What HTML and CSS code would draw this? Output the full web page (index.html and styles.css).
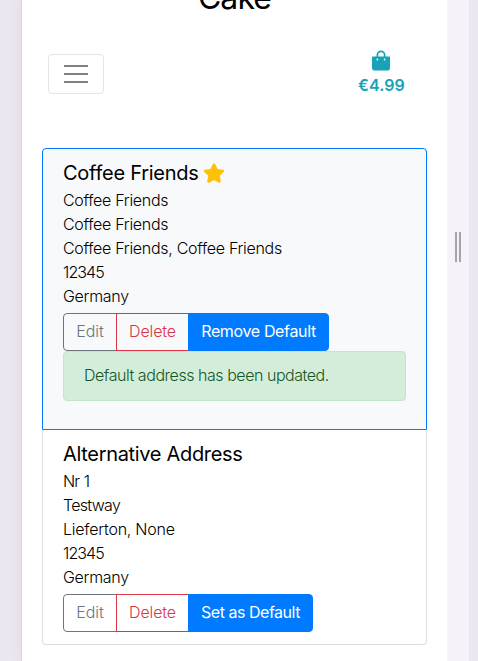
FILE: index.html
```html
<!DOCTYPE html>
<html lang="en">
<head>
<meta charset="utf-8">
<title>Addresses</title>
<link rel="stylesheet" href="styles.css">
</head>
<body>
<div class="stage">
  <main class="page">
    <h1 class="brand"><span>Cake</span></h1>
    <nav class="navbar">
      <button class="toggler" aria-label="Menu">
        <svg width="30" height="30" viewBox="0 0 30 30"><path d="M3 7h24M3 15h24M3 23h24" stroke="#808080" stroke-width="2" stroke-linecap="butt"/></svg>
      </button>
      <a class="cart">
        <svg class="bag" width="18" height="21" viewBox="0 0 18 21"><path d="M5.400 8V5a3.600 3.600 0 0 1 7.200 0V8" fill="none" stroke="#17a2b8" stroke-width="1.700"/><path d="M1 6.500h16a1 1 0 0 1 1 1v9.900a3.200 3.200 0 0 1-3.200 3.200H3.200A3.200 3.200 0 0 1 0 17.400V7.500a1 1 0 0 1 1-1z" fill="#17a2b8"/><circle cx="5.400" cy="9.500" r=".9" fill="#fff"/><circle cx="12.600" cy="9.500" r=".9" fill="#fff"/></svg>
        <span class="price">€4.99</span>
      </a>
    </nav>
    <section class="list">
      <article class="item active">
        <h5><span>Coffee Friends</span><svg class="star" width="22" height="20" viewBox="0 0 576 512"><path fill="#ffc107" d="M259.300 17.800 194 150.200 47.900 171.500c-26.200 3.800-36.700 36.100-17.700 54.600l105.700 103-25 145.500c-4.500 26.300 23.200 46 46.400 33.700L288 439.600l130.700 68.700c23.200 12.200 50.900-7.400 46.400-33.700l-25-145.500 105.700-103c19-18.500 8.500-50.800-17.700-54.600L382 150.200 316.700 17.800c-11.700-23.600-45.600-23.900-57.400 0z"/></svg></h5>
        <p>Coffee Friends</p>
        <p>Coffee Friends</p>
        <p>Coffee Friends, Coffee Friends</p>
        <p class="zip">12345</p>
        <p>Germany</p>
        <div class="group"><button class="edit">Edit</button><button class="delete">Delete</button><button class="primary remove">Remove Default</button></div>
        <div class="alert">Default address has been updated.</div>
      </article>
      <article class="item">
        <h5 class="alt">Alternative Address</h5>
        <p class="nr">Nr 1</p>
        <p class="street">Testway</p>
        <p class="city">Lieferton, None</p>
        <p class="zip">12345</p>
        <p>Germany</p>
        <div class="group"><button class="edit">Edit</button><button class="delete">Delete</button><button class="primary set">Set as Default</button></div>
      </article>
    </section>
  </main>
  <aside class="handle"><i></i><i></i></aside>
</div>
</body>
</html>
```
FILE: styles.css
```css
* { box-sizing: border-box; }
body {
  margin: 0;
  height: 661px;
  overflow: hidden;
  background: #ece6f1;
  font: 300 16px/24px Inter, "Liberation Sans", sans-serif;
  letter-spacing: -0.3px;
  color: #000;
}
h1, h5, p { margin: 0; }
p { height: 24px; line-height: 22px; white-space: nowrap; }
button { font: inherit; letter-spacing: inherit; white-space: nowrap; }
.stage { display: flex; height: 661px; padding-left: 22px; }
.page {
  width: 425px;
  padding: 0 20px;
  background: #fff;
  box-shadow: 0 0 1px rgba(0,0,0,.35), 0 0 16px rgba(60,30,80,.06);
}
.handle {
  display: flex;
  justify-content: center;
  gap: 2px;
  width: 22px;
  padding-top: 232px;
  background: #f6f2f9;
  z-index: 1;
}
.handle i { width: 2px; height: 30px; background: #a5a5a8; }
.brand {
  height: 40px;
  margin-top: -22px;
  text-align: center;
  font-size: 32px;
  line-height: 40px;
  font-weight: 400;
  letter-spacing: -0.9px;
}
.navbar {
  display: flex;
  justify-content: space-between;
  align-items: flex-start;
  height: 130px;
  padding: 32px 22px 0 6px;
}
.toggler {
  display: flex;
  align-items: center;
  justify-content: center;
  width: 56px;
  height: 40px;
  margin-top: 4px;
  padding: 0;
  background: #fff;
  border: 1px solid #e5e5e5;
  border-radius: 4px;
}
.cart { display: flex; flex-direction: column; align-items: center; width: 47px; color: #17a2b8; }
.bag { display: block; margin-right: 1px; }
.price { font-weight: 600; line-height: 24px; margin-top: 2px; letter-spacing: 0.1px; }
.item {
  padding: 12px 20px;
  border: 1px solid #dfdfdf;
  border-top: 0;
  border-radius: 0 0 4px 4px;
  background: #fff;
}
.item.active { border: 1px solid #007bff; border-radius: 4px 4px 0 0; background: #f8f9fa; }
h5 {
  display: flex;
  align-items: center;
  gap: 4px;
  height: 24px;
  margin-bottom: 4px;
  font-size: 20px;
  line-height: 24px;
  font-weight: 400;
  letter-spacing: -0.26px;
  white-space: nowrap;
}
.alt { letter-spacing: -0.32px; }
.nr { letter-spacing: -0.9px; word-spacing: 1px; }
.street { letter-spacing: -0.7px; }
.zip { letter-spacing: -0.9px; }
.city { letter-spacing: -0.24px; }
.group { display: flex; height: 38px; margin-top: 4px; }
.group button { height: 38px; padding: 0 0 2px; border: 1px solid; background: transparent; }
.group .edit { width: 54px; color: #6c757d; border-radius: 4px 0 0 4px; letter-spacing: 0; }
.group .delete { width: 73px; margin-left: -1px; color: #dc3545; letter-spacing: -0.15px; }
.group .primary { width: 141px; margin-left: -1px; color: #fff; background: #007bff; border-color: #007bff; border-radius: 0 4px 4px 0; font-weight: 400; letter-spacing: -0.35px; }
.group .set { width: 125px; letter-spacing: -0.48px; }
.alert {
  height: 50px;
  margin-bottom: 16px;
  padding: 11px 20px;
  border: 1px solid #c3e6cb;
  border-radius: 4px;
  background: #d4edda;
  color: #155724;
  letter-spacing: -0.46px;
  white-space: nowrap;
}
```
